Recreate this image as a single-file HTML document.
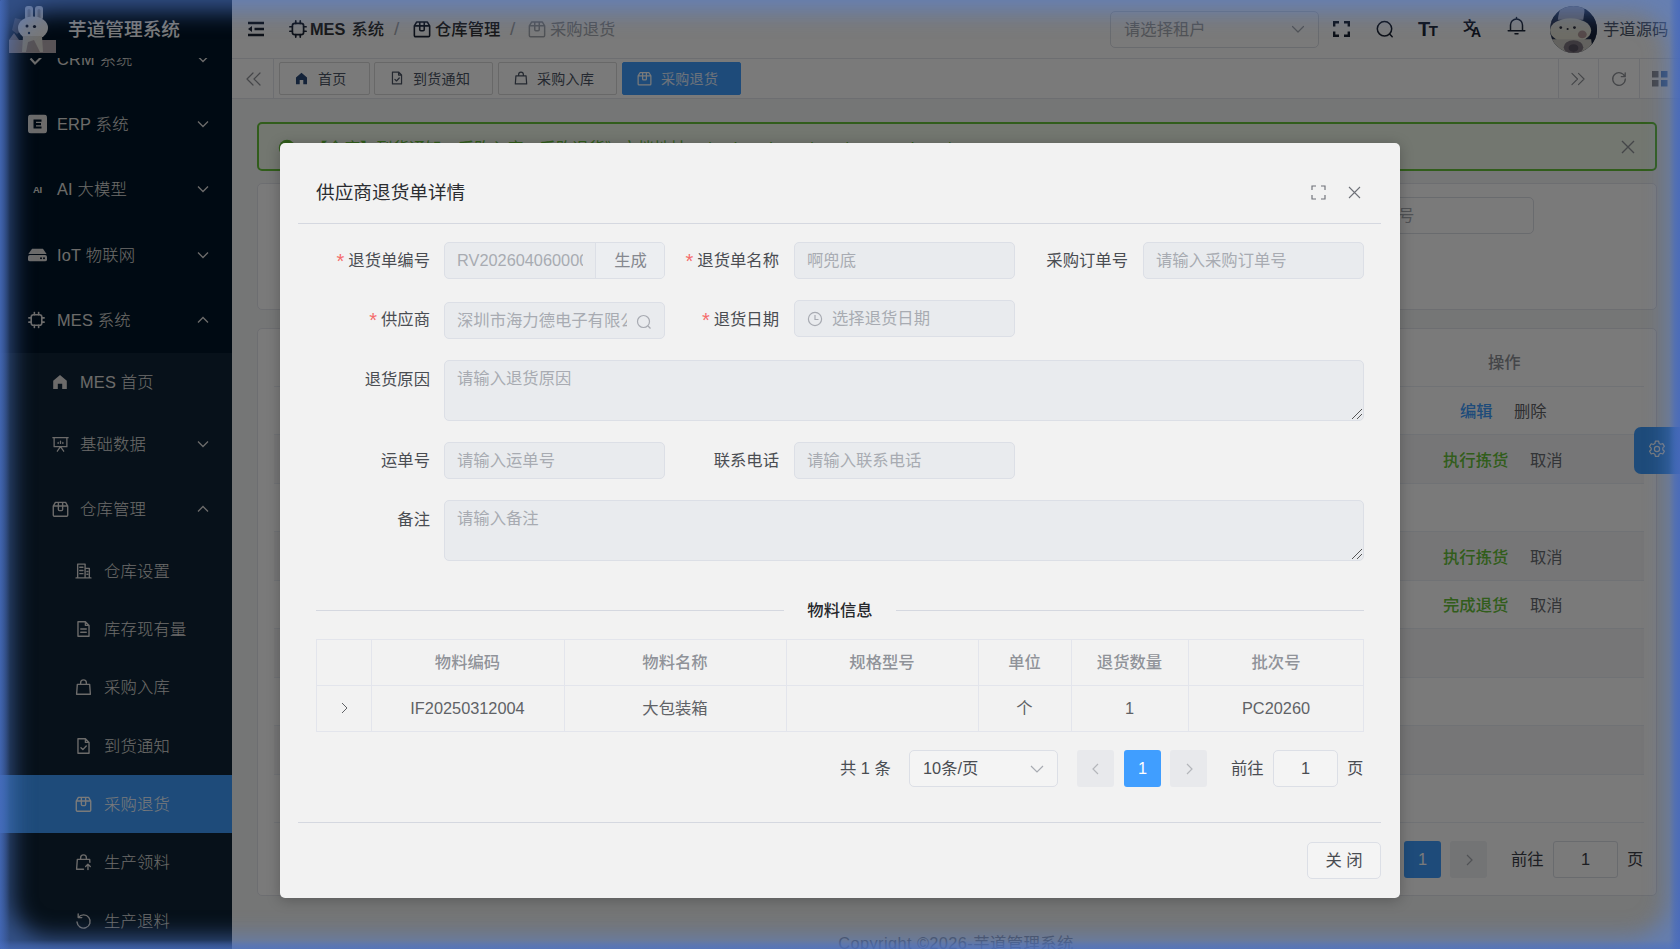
<!DOCTYPE html>
<html lang="zh-CN">
<head>
<meta charset="utf-8">
<title>芋道管理系统</title>
<style>
*{box-sizing:border-box}
html,body{margin:0;padding:0}
body{width:1680px;height:949px;overflow:hidden;position:relative;background:#f5f6f7;color:#303133;
  font-family:"Liberation Sans","Noto Sans CJK SC",sans-serif;font-size:16.33px;line-height:1}
.abs{position:absolute}
svg{display:block}
/* ---------- sidebar ---------- */
#side{position:absolute;left:0;top:0;width:232px;height:949px;background:#001529;overflow:hidden}
#menu{position:absolute;left:0;top:26px;width:232px}
.mi{position:relative;height:65.33px;color:#e2e0de;font-size:16.33px}
.mi.s{height:58.33px}
.mi .tx{position:absolute;top:50%;transform:translateY(-50%);white-space:nowrap;letter-spacing:.2px;font-weight:300}
.mi .ic{position:absolute;top:50%;transform:translateY(-50%)}
.mi .ar{position:absolute;left:196px;top:50%;width:14px;height:14px;transform:translateY(-50%)}
.l1 .ic{left:28px}.l1 .tx{left:57px}
.l2 .ic{left:52px}.l2 .tx{left:80px}
.l3 .ic{left:75px}.l3 .tx{left:104px}
.sub{background:#0f2438}
.mi.act{background:#409eff;color:#fff}
#logo{position:absolute;left:0;top:0;width:232px;height:58px;background:#001529}
#logo .t{position:absolute;left:68px;top:20.5px;font-size:18.67px;font-weight:500;color:#fff;letter-spacing:0}
/* ---------- header ---------- */
#hdr{position:absolute;left:232px;top:0;width:1448px;height:59px;background:#fff;border-bottom:1px solid #e4e7ed}
#tags svg{z-index:2}
#tags{z-index:0;position:absolute;left:232px;top:59px;width:1448px;height:40px;background:#fff;border-bottom:1px solid #e4e7ed}
.bc{position:absolute;top:21px;font-size:16.33px;font-weight:500;color:#303133;white-space:nowrap}
.tag{position:absolute;top:3px;z-index:0;height:33px;border:1px solid #d9d9d9;border-radius:2px;color:#4c5564;font-size:14px;background:#fff}
.tag .tx{position:absolute;top:9px;white-space:nowrap;letter-spacing:.3px}
.tag.on{background:#409eff;border-color:#409eff;color:#e3efff}

/* ---------- background page ---------- */
.card{position:absolute;background:#fff;border:1px solid #e4e7ed;border-radius:5px}
#alert{position:absolute;left:257px;top:122px;width:1400px;height:49px;border:2px solid #67c23a;border-radius:5px;background:#f0f9eb;color:#67c23a;font-size:16.33px}
.trow{position:absolute;left:16px;right:12px;height:1px;background:#ebeef5}
.op{position:absolute;font-size:16.33px;font-weight:500;white-space:nowrap}
.pbtn{position:absolute;top:841px;height:37px;border-radius:3px;font-size:16.33px;text-align:center;line-height:37px}
#overlay{position:absolute;left:0;top:0;width:1680px;height:949px;background:rgba(0,0,0,.52)}
#vig{position:absolute;left:-20px;top:-20px;width:1720px;height:989px;pointer-events:none;border-radius:70px;box-shadow:inset 0 0 22px 32px rgba(88,132,222,.56)}
#vig2{position:absolute;left:0;top:0;width:1680px;height:949px;pointer-events:none;background:
 linear-gradient(to top,rgba(75,112,195,.6) 0,rgba(75,112,195,.4) 4px,rgba(75,112,195,0) 9px) bottom/100% 9px no-repeat,
 linear-gradient(to right,rgba(70,108,190,.8) 0,rgba(70,108,190,.5) 4px,rgba(70,108,190,0) 10px) left/10px 100% no-repeat,
 linear-gradient(to left,rgba(70,105,188,.85) 0,rgba(70,105,188,.6) 5px,rgba(70,105,188,0) 11px) right/11px 100% no-repeat}

/* ---------- modal ---------- */
#modal{position:absolute;left:280px;top:143px;width:1120px;height:755px;background:#f2f2f2;border-radius:5px;color:#303133;box-shadow:0 2px 14px rgba(0,0,0,.25)}
#modal .hl{position:absolute;left:18px;width:1083px;height:1px;background:#d5d8e0}
.lb{position:absolute;width:200px;text-align:right;font-size:16.33px;color:#4a4d52;white-space:nowrap}
.lb i{font-style:normal;color:#f56c6c;margin-right:4px;font-size:20px;line-height:10px;position:relative;top:2px}
.ip{position:absolute;height:37px;background:#e9ebee;border:1px solid #dcdfe6;border-radius:5px;font-size:16.33px;color:#a8abb2;overflow:hidden}
.ip .tx{position:absolute;left:12px;top:9px;white-space:nowrap}
.ta{height:61px}
.th,.td{position:absolute;text-align:center;font-size:16.33px;white-space:nowrap}
.th{color:#909399;font-weight:500}
.td{color:#606266}
.vl{position:absolute;top:497px;width:1px;height:92px;background:#e3e5ec}
.pg{position:absolute;top:607px;height:37px;border-radius:3px;font-size:16.33px;text-align:center;line-height:37px}
</style>
</head>
<body>

<!-- ================= SIDEBAR ================= -->
<div id="side">
  <div id="menu">
    <div class="mi l1"><svg class="ic" style="width:20px;height:20px" viewBox="0 0 20 20" fill="none" stroke="currentColor" stroke-width="1.3" stroke-linejoin="round" stroke-linecap="round"><path d="M2.5 9.5l4.5 5L18 3.500" stroke-width="2.2" stroke-linecap="butt" stroke-linejoin="miter"/></svg><div class="tx">CRM 系统</div><svg class="ar" viewBox="0 0 14 14" fill="none" stroke="currentColor" stroke-width="1.3"><path d="M2 4.5l5 5 5-5"/></svg></div>
    <div class="mi l1"><svg class="ic" style="width:19px;height:19px" viewBox="0 0 19 19" fill="currentColor"><rect width="19" height="19" rx="3.2"/><path d="M5.5 5h8v2.2H8v1.3h5v2.2H8v1.3h5.5V14h-8z" fill="#001529"/></svg><div class="tx">ERP 系统</div><svg class="ar" viewBox="0 0 14 14" fill="none" stroke="currentColor" stroke-width="1.3"><path d="M2 4.5l5 5 5-5"/></svg></div>
    <div class="mi l1"><div class="ic" style="left:33px;width:10px;height:9px;font-size:9.5px;font-weight:700;line-height:9px;letter-spacing:-.3px;font-family:'Liberation Sans',sans-serif">AI</div><div class="tx">AI 大模型</div><svg class="ar" viewBox="0 0 14 14" fill="none" stroke="currentColor" stroke-width="1.3"><path d="M2 4.5l5 5 5-5"/></svg></div>
    <div class="mi l1"><svg class="ic" style="width:19px;height:13px" viewBox="0 0 19 13" fill="currentColor"><path d="M4.2 0h10.6L18.6 5.6H.4z"/><rect x="0" y="6.4" width="19" height="6.6" rx="2"/><circle cx="13" cy="9.7" r="1" fill="#001529"/><circle cx="16" cy="9.7" r="1" fill="#001529"/></svg><div class="tx">IoT 物联网</div><svg class="ar" viewBox="0 0 14 14" fill="none" stroke="currentColor" stroke-width="1.3"><path d="M2 4.5l5 5 5-5"/></svg></div>
    <div class="mi l1"><svg class="ic" style="width:17px;height:17px" viewBox="0 0 16 16" fill="none" stroke="currentColor" stroke-width="1.5" stroke-linejoin="round" stroke-linecap="round"><rect x="3" y="3" width="10" height="10" rx="2.2"/><path d="M6 .8v2.2M10 .8v2.2M6 13v2.2M10 13v2.2M.8 6h2.2M.8 10h2.2M13 6h2.2M13 10h2.2"/></svg><div class="tx">MES 系统</div><svg class="ar" viewBox="0 0 14 14" fill="none" stroke="currentColor" stroke-width="1.3"><path d="M2 9.5l5-5 5 5"/></svg></div>
    <div class="sub">
      <div class="mi s l2"><svg class="ic" style="width:16px;height:16px" viewBox="0 0 16 16" fill="currentColor"><path d="M8 1L1.2 6.8V15h4.6v-5.2h4.4V15h4.6V6.8z"/></svg><div class="tx">MES 首页</div></div>
      <div class="mi l2"><svg class="ic" style="width:17px;height:17px" viewBox="0 0 16 16" fill="none" stroke="currentColor" stroke-width="1.2" stroke-linejoin="round" stroke-linecap="round"><path d="M.8 2h14.4M2 2v8.5h12V2M5 14.8l3-4.3 3 4.3M5.8 6.5v1M8 5.2v2.3M10.2 6.5v1"/></svg><div class="tx">基础数据</div><svg class="ar" viewBox="0 0 14 14" fill="none" stroke="currentColor" stroke-width="1.3"><path d="M2 4.5l5 5 5-5"/></svg></div>
      <div class="mi l2"><svg class="ic" style="width:17px;height:17px" viewBox="0 0 16 16" fill="none" stroke="currentColor" stroke-width="1.3" stroke-linejoin="round" stroke-linecap="round"><path d="M1.2 5.2L3.2 1.8h9.6l2 3.4v8.6a1 1 0 0 1-1 1H2.2a1 1 0 0 1-1-1zM1.2 5.2h13.6M6 1.8v6.7a1 1 0 0 0 1 1h2a1 1 0 0 0 1-1V1.8"/></svg><div class="tx">仓库管理</div><svg class="ar" viewBox="0 0 14 14" fill="none" stroke="currentColor" stroke-width="1.3"><path d="M2 9.5l5-5 5 5"/></svg></div>
      <div class="mi s l3"><svg class="ic" style="width:17px;height:17px" viewBox="0 0 16 16" fill="none" stroke="currentColor" stroke-width="1.3" stroke-linejoin="round" stroke-linecap="round"><path d="M2.5 14.5V1.5h7v13M9.5 5.5h4v9M1 14.5h14M4.5 4.5h3M4.5 7.5h3M4.5 10.5h3M11.2 8.5h.8M11.2 11h.8"/></svg><div class="tx">仓库设置</div></div>
      <div class="mi s l3"><svg class="ic" style="width:17px;height:17px" viewBox="0 0 16 16" fill="none" stroke="currentColor" stroke-width="1.3" stroke-linejoin="round" stroke-linecap="round"><path d="M2.8 1.2h7L13.2 4.6v10.2H2.8zM9.8 1.2v3.4h3.4M5.4 8h5.2M5.4 11h5.2"/></svg><div class="tx">库存现有量</div></div>
      <div class="mi s l3"><svg class="ic" style="width:17px;height:17px" viewBox="0 0 16 16" fill="none" stroke="currentColor" stroke-width="1.3" stroke-linejoin="round" stroke-linecap="round"><path d="M2.2 5.5h11.6l.7 9.3H1.5zM5.3 5.5V4a2.7 2.7 0 0 1 5.4 0v1.5"/></svg><div class="tx">采购入库</div></div>
      <div class="mi s l3"><svg class="ic" style="width:17px;height:17px" viewBox="0 0 16 16" fill="none" stroke="currentColor" stroke-width="1.3" stroke-linejoin="round" stroke-linecap="round"><path d="M2.8 1.2h7L13.2 4.6v10.2H2.8zM9.8 1.2v3.4h3.4M5.6 9.6l1.8 1.8 3.2-3.4"/></svg><div class="tx">到货通知</div></div>
      <div class="mi s l3 act"><svg class="ic" style="width:17px;height:17px" viewBox="0 0 16 16" fill="none" stroke="currentColor" stroke-width="1.3" stroke-linejoin="round" stroke-linecap="round"><path d="M1.2 5.2L3.2 1.8h9.6l2 3.4v8.6a1 1 0 0 1-1 1H2.2a1 1 0 0 1-1-1zM1.2 5.2h13.6M6 1.8v6.7a1 1 0 0 0 1 1h2a1 1 0 0 0 1-1V1.8"/></svg><div class="tx">采购退货</div></div>
      <div class="mi s l3"><svg class="ic" style="width:17px;height:17px" viewBox="0 0 16 16" fill="none" stroke="currentColor" stroke-width="1.3" stroke-linejoin="round" stroke-linecap="round"><path d="M8 14.8H1.5l.7-9.3h11.6l.2 2.8M5.3 5.5V4a2.7 2.7 0 0 1 5.4 0v1.5M12.2 15.2V10M10 12.2l2.2-2.2 2.2 2.2"/></svg><div class="tx">生产领料</div></div>
      <div class="mi s l3"><svg class="ic" style="width:17px;height:17px" viewBox="0 0 16 16" fill="none" stroke="currentColor" stroke-width="1.3" stroke-linejoin="round" stroke-linecap="round"><path d="M3.2 4.6A6.2 6.2 0 1 1 1.9 9M3 1.4v3.4h3.4"/></svg><div class="tx">生产退料</div></div>
    </div>
  </div>
  <div id="logo"><svg class="abs" style="left:9px;top:6px" width="47" height="47" viewBox="0 0 47 47">
<rect x="0" y="34" width="47" height="13" fill="#b9aeb4"/>
<path d="M6 12l8 2 2 8-8 6-5-4z" fill="#8d7f80" opacity=".6"/>
<path d="M0 34l5-7 5 7z" fill="#9c8c88"/>
<rect x="16" y="0" width="8" height="14" rx="3" fill="#e9e9e6"/><rect x="26" y="0" width="8" height="14" rx="3" fill="#e9e9e6"/>
<rect x="18.500" y="3" width="3" height="10" rx="1.500" fill="#a9a6a4"/><rect x="28.500" y="3" width="3" height="10" rx="1.500" fill="#a9a6a4"/>
<ellipse cx="24" cy="22" rx="15" ry="11.500" fill="#fbfbfb"/>
<path d="M14 30h19l1 16H13z" fill="#e4e2dc"/>
<path d="M19 36l6-2 6 12H17z" fill="#b5a9ae"/>
<circle cx="18" cy="20" r="1.500" fill="#0a1020"/><circle cx="25.500" cy="20.500" r="1.600" fill="#0a1020"/><circle cx="20" cy="27" r="1.200" fill="#2b4a78"/>
</svg><div class="t">芋道管理系统</div></div>
</div>

<!-- ================= HEADER ================= -->
<div id="hdr"><svg class="abs" style="left:15px;top:21px;color:#1d2433" width="18" height="16" viewBox="0 0 18 16" fill="none" stroke="currentColor" stroke-width="1.4" stroke-linejoin="round" stroke-linecap="round"><path d="M1 2h16M7.5 8h9.5M1 14h16" stroke-width="2.4" stroke-linecap="butt"/><path d="M5 5L1 8l4 3z" fill="currentColor" stroke="none"/></svg><svg class="abs" style="left:57px;top:20px;color:#1d2433" width="18" height="18" viewBox="0 0 16 16" fill="none" stroke="currentColor" stroke-width="1.5" stroke-linejoin="round" stroke-linecap="round"><rect x="3" y="3" width="10" height="10" rx="2.2"/><path d="M6 .8v2.2M10 .8v2.2M6 13v2.2M10 13v2.2M.8 6h2.2M.8 10h2.2M13 6h2.2M13 10h2.2"/></svg><svg class="abs" style="left:181px;top:20px;color:#1d2433" width="18" height="18" viewBox="0 0 16 16" fill="none" stroke="currentColor" stroke-width="1.4" stroke-linejoin="round" stroke-linecap="round"><path d="M1.2 5.2L3.2 1.8h9.6l2 3.4v8.6a1 1 0 0 1-1 1H2.2a1 1 0 0 1-1-1zM1.2 5.2h13.6M6 1.8v6.7a1 1 0 0 0 1 1h2a1 1 0 0 0 1-1V1.8"/></svg><svg class="abs" style="left:296px;top:20px;color:#a8abb2" width="18" height="18" viewBox="0 0 16 16" fill="none" stroke="currentColor" stroke-width="1.3" stroke-linejoin="round" stroke-linecap="round"><path d="M1.2 5.2L3.2 1.8h9.6l2 3.4v8.6a1 1 0 0 1-1 1H2.2a1 1 0 0 1-1-1zM1.2 5.2h13.6M6 1.8v6.7a1 1 0 0 0 1 1h2a1 1 0 0 0 1-1V1.8"/></svg><div class="abs" style="left:162px;top:19px;font-size:19px;color:#a8abb2">/</div><div class="abs" style="left:278px;top:19px;font-size:19px;color:#a8abb2">/</div><div class="abs" style="left:878px;top:11px;width:209px;height:37px;border:1px solid #dcdfe6;border-radius:5px"></div><div class="abs" style="left:892px;top:21px;font-size:16.33px;color:#a8abb2;white-space:nowrap">请选择租户</div><svg class="abs" style="left:1059px;top:23px;color:#a8abb2" width="14" height="12" viewBox="0 0 14 12" fill="none" stroke="currentColor" stroke-width="1.2" stroke-linejoin="round" stroke-linecap="round"><path d="M1.5 3.5l5.5 5.5 5.5-5.5"/></svg><svg class="abs" style="left:1101px;top:21px;color:#1d2433" width="17" height="16" viewBox="0 0 17 16" fill="none" stroke="currentColor" stroke-width="1.4" stroke-linejoin="round" stroke-linecap="round"><path d="M1.2 5.5V1.2H6M11 1.2h4.8v4.3M15.8 10.5v4.3H11M6 14.8H1.2v-4.3" stroke-width="2.4" stroke-linecap="butt" stroke-linejoin="miter"/></svg><svg class="abs" style="left:1144px;top:20px;color:#1d2433" width="18" height="18" viewBox="0 0 18 18" fill="none" stroke="currentColor" stroke-width="1.5" stroke-linejoin="round" stroke-linecap="round"><circle cx="8.5" cy="8.8" r="7.2"/><path d="M13.6 14l2.6 2.8"/></svg><div class="abs" style="left:1186px;top:19px;font-size:20px;font-weight:700;color:#1d2433;font-family:'Liberation Sans',sans-serif;letter-spacing:-1.5px;line-height:20px">T<span style="font-size:15px">T</span></div><div class="abs" style="left:1231px;top:19px;font-size:13px;font-weight:700;color:#1d2433;line-height:13px">文</div><div class="abs" style="left:1239px;top:25px;font-size:14px;font-weight:700;color:#1d2433;line-height:14px;font-family:'Liberation Sans',sans-serif">A</div><svg class="abs" style="left:1275px;top:16px;color:#1d2433" width="19" height="20" viewBox="0 0 19 20" fill="none" stroke="currentColor" stroke-width="1.5" stroke-linejoin="round" stroke-linecap="round"><path d="M9.5 1.5v1.3M3.5 14.5V9a6 6 0 0 1 12 0v5.5M1.2 14.8h16.6M8 17.8h3"/></svg><div class="abs" style="left:1317.500px;top:5.500px;width:47px;height:47px;border-radius:50%;overflow:hidden"><svg width="47" height="47" viewBox="0 0 48 48"><rect width="48" height="48" fill="#2a3650"/><path d="M10 0h24l4 14H8z" fill="#b5b4c2"/><path d="M36 0h12v48h-6l-2-20-6-14z" fill="#18233c"/><path d="M0 0h12L8 10 0 18z" fill="#22304a"/><ellipse cx="21" cy="25" rx="21" ry="12.500" fill="#e6e4d6"/><path d="M2 34h40l2 14H0z" fill="#cfcec6"/><ellipse cx="24" cy="42" rx="10" ry="7" fill="#7e7580"/><ellipse cx="24" cy="43" rx="5" ry="4" fill="#5b5563"/><circle cx="11" cy="22" r="1.400" fill="#2a2a33"/><circle cx="18" cy="23.500" r="1.100" fill="#2a2a33"/><circle cx="25" cy="22" r="1.400" fill="#2a2a33"/><ellipse cx="33" cy="29" rx="4.500" ry="4" fill="#b39a98"/></svg></div><div class="abs" style="left:1371px;top:21px;font-size:16.33px;color:#4c5564;white-space:nowrap">芋道源码</div>
  <div class="bc" style="left:78px;word-spacing:1.5px"><b>MES</b> 系统</div>
  <div class="bc" style="left:203px">仓库管理</div>
  <div class="bc" style="left:318px;color:#a8abb2;font-weight:400">采购退货</div>
</div>
<div id="tags"><svg class="abs" style="left:14px;top:13px;color:#909399" width="15" height="14" viewBox="0 0 15 14" fill="none" stroke="currentColor" stroke-width="1.2" stroke-linejoin="round" stroke-linecap="round"><path d="M7 1L1 7l6 6M14 1L8 7l6 6"/></svg><div class="abs" style="left:41px;top:0;width:1px;height:39px;background:#e4e7ed"></div><svg class="abs" style="left:63px;top:13px;color:#2b4a78" width="13" height="13" viewBox="0 0 16 16" fill="currentColor"><path d="M8 1L1.2 6.8V15h4.6v-5.2h4.4V15h4.6V6.8z"/></svg><svg class="abs" style="left:158px;top:12px;color:#4c5564" width="14" height="14" viewBox="0 0 16 16" fill="none" stroke="currentColor" stroke-width="1.4" stroke-linejoin="round" stroke-linecap="round"><path d="M2.8 1.2h7L13.2 4.6v10.2H2.8zM9.8 1.2v3.4h3.4M5.6 9.6l1.8 1.8 3.2-3.4"/></svg><svg class="abs" style="left:282px;top:12px;color:#4c5564" width="14" height="14" viewBox="0 0 16 16" fill="none" stroke="currentColor" stroke-width="1.4" stroke-linejoin="round" stroke-linecap="round"><path d="M2.2 5.5h11.6l.7 9.3H1.5zM5.3 5.5V4a2.7 2.7 0 0 1 5.4 0v1.5"/></svg><svg class="abs" style="left:405px;top:12px;color:#fff" width="15" height="15" viewBox="0 0 16 16" fill="none" stroke="currentColor" stroke-width="1.3" stroke-linejoin="round" stroke-linecap="round"><path d="M1.2 5.2L3.2 1.8h9.6l2 3.4v8.6a1 1 0 0 1-1 1H2.2a1 1 0 0 1-1-1zM1.2 5.2h13.6M6 1.8v6.7a1 1 0 0 0 1 1h2a1 1 0 0 0 1-1V1.8"/></svg><div class="abs" style="left:1326px;top:0;width:1px;height:39px;background:#e4e7ed"></div><div class="abs" style="left:1366px;top:0;width:1px;height:39px;background:#e4e7ed"></div><div class="abs" style="left:1407px;top:0;width:1px;height:39px;background:#e4e7ed"></div><svg class="abs" style="left:1339px;top:13px;color:#909399" width="14" height="14" viewBox="0 0 15 14" fill="none" stroke="currentColor" stroke-width="1.2" stroke-linejoin="round" stroke-linecap="round"><path d="M1 1l6 6-6 6M8 1l6 6-6 6"/></svg><svg class="abs" style="left:1379px;top:12px;color:#909399" width="16" height="16" viewBox="0 0 16 16" fill="none" stroke="currentColor" stroke-width="1.3" stroke-linejoin="round" stroke-linecap="round"><path d="M13.8 5.5A6.3 6.3 0 1 0 14.3 8M14.2 1.8v3.9h-3.9"/></svg><svg class="abs" style="left:1420px;top:12px;color:#909399" width="16" height="16" viewBox="0 0 16 16" fill="currentColor"><rect x="0" y="0" width="6.5" height="6.5"/><rect x="0" y="9" width="6.5" height="6.5"/><rect x="9" y="0" width="6.5" height="6.5" fill="#6f9ad6"/><rect x="9" y="9" width="6.5" height="6.5" fill="#6f9ad6"/></svg>
  <div class="tag" style="left:47px;width:91px"><div class="tx" style="left:38px">首页</div></div>
  <div class="tag" style="left:142px;width:119px"><div class="tx" style="left:38px">到货通知</div></div>
  <div class="tag" style="left:266px;width:119px"><div class="tx" style="left:38px">采购入库</div></div>
  <div class="tag on" style="left:390px;width:119px"><div class="tx" style="left:38px">采购退货</div></div>
</div>


<!-- ================= BACKGROUND PAGE ================= -->
<div id="alert"><svg class="abs" style="left:19px;top:15px" width="18" height="18" viewBox="0 0 18 18"><circle cx="9" cy="9" r="8.2" fill="#67c23a"/><rect x="8" y="7.500" width="2" height="6" fill="#f0f9eb"/><rect x="8" y="4" width="2" height="2" fill="#f0f9eb"/></svg>
  <div class="abs" style="left:52px;top:16px;white-space:nowrap">【仓库】到货通知、采购入库、采购退货》文档地址：doc.iocoder.cn/mes/wm-purchase/</div>
  <svg class="abs" style="left:1361px;top:15px" width="16" height="16" viewBox="0 0 16 16"><path d="M2 2L14 14M14 2L2 14" stroke="#909399" stroke-width="1.4" fill="none"/></svg>
</div>
<div class="card" style="left:257px;top:183px;width:1400px;height:127px">
  <div class="abs" style="left:1043px;top:13px;width:233px;height:37px;border:1px solid #dcdfe6;border-radius:5px"></div>
  <div class="abs" style="left:1140px;top:23px;color:#a8abb2;font-size:16.33px">号</div>
</div>
<div class="card" style="left:257px;top:328px;width:1400px;height:568px">
  <div class="abs" style="left:16px;right:12px;top:106px;height:48px;background:#f7f7f8"></div><div class="abs" style="left:16px;right:12px;top:203px;height:48px;background:#f7f7f8"></div><div class="abs" style="left:16px;right:12px;top:300px;height:48px;background:#f7f7f8"></div><div class="abs" style="left:16px;right:12px;top:397px;height:48px;background:#f7f7f8"></div><div class="op" style="left:1230px;top:24.5px;color:#909399">操作</div>
  <div class="trow" style="top:57px"></div>
  <div class="trow" style="top:105px"></div>
  <div class="trow" style="top:154px"></div>
  <div class="trow" style="top:202px"></div>
  <div class="trow" style="top:251px"></div>
  <div class="trow" style="top:299px"></div>
  <div class="trow" style="top:348px"></div>
  <div class="trow" style="top:396px"></div>
  <div class="trow" style="top:445px"></div>
  <div class="trow" style="top:493px"></div>
  <div class="op" style="left:1202px;top:73.5px;color:#409eff">编辑</div>
  <div class="op" style="left:1256px;top:73.5px;color:#606266;font-weight:400">删除</div>
  <div class="op" style="left:1185px;top:122.5px;color:#67c23a">执行拣货</div>
  <div class="op" style="left:1272px;top:122.5px;color:#6a6d73;font-weight:400">取消</div>
  <div class="op" style="left:1185px;top:219.5px;color:#67c23a">执行拣货</div>
  <div class="op" style="left:1272px;top:219.5px;color:#6a6d73;font-weight:400">取消</div>
  <div class="op" style="left:1185px;top:267.5px;color:#67c23a">完成退货</div>
  <div class="op" style="left:1272px;top:267.5px;color:#6a6d73;font-weight:400">取消</div>
</div>
<div class="pbtn" style="left:1404px;width:37px;background:#409eff;color:#fff">1</div>
<div class="pbtn" style="left:1450px;width:37px;background:#f0f2f5;color:#303133"><svg class="abs" style="left:13px;top:13px" width="12" height="12" viewBox="0 0 12 12"><path d="M4 1L9 6L4 11" stroke="#a8abb2" stroke-width="1.2" fill="none"/></svg></div>
<div class="abs" style="left:1511px;top:851px;font-size:16.33px;color:#3c4048">前往</div>
<div class="pbtn" style="left:1553px;width:65px;border:1px solid #dcdfe6;background:#fff;color:#3c4048;line-height:35px">1</div>
<div class="abs" style="left:1627px;top:851px;font-size:16.33px;color:#3c4048">页</div>
<div class="abs" style="left:756px;top:935px;width:400px;text-align:center;font-size:16.33px;color:#909399;white-space:nowrap;letter-spacing:.42px">Copyright ©2026-芋道管理系统</div>
<div class="abs" style="left:1634px;top:427px;width:46px;height:47px;background:#409eff;border-radius:7px 0 0 7px"><svg class="abs" style="left:14px;top:13px" width="18" height="18" viewBox="0 0 18 18" fill="none" stroke="#fff" stroke-width="1.2" stroke-linejoin="round"><path d="M7.4 1.2h3.2l.5 2.2 1.6.9 2.1-.7 1.6 2.8-1.6 1.5v1.8l1.6 1.5-1.6 2.8-2.1-.7-1.6.9-.5 2.2H7.4l-.5-2.2-1.6-.9-2.1.7-1.6-2.8 1.6-1.5V8.1L1.600 6.600l1.600-2.800 2.100.700 1.600-.900z"/><circle cx="9" cy="9" r="2.6"/></svg></div>

<div id="overlay"></div>

<!-- ================= MODAL ================= -->
<div id="modal">
  <div class="abs" style="left:36px;top:40.5px;font-size:18.67px;color:#2b2d31;white-space:nowrap">供应商退货单详情</div>
  <svg class="abs" style="left:1031px;top:42px" width="15" height="15" viewBox="0 0 15 15"><path d="M1 5V1H5M10 1H14V5M14 10V14H10M5 14H1V10" stroke="#6e7178" stroke-width="1.15" fill="none"/></svg>
  <svg class="abs" style="left:1068px;top:43px" width="13" height="13" viewBox="0 0 13 13"><path d="M1 1L12 12M12 1L1 12" stroke="#6e7178" stroke-width="1.1" fill="none"/></svg>
  <div class="hl" style="top:80px"></div>

  <!-- row 1 -->
  <div class="lb" style="left:-50px;top:109px"><i>*</i>退货单编号</div>
  <div class="ip" style="left:164px;top:99px;width:221px">
    <div class="tx" style="width:126px;overflow:hidden">RV202604060000</div>
    <div class="abs" style="left:150px;top:-1px;width:71px;height:37px;border:1px solid #dcdfe6;border-radius:0 5px 5px 0;background:#eceef1;color:#85888f;text-align:center;line-height:35px">生成</div>
  </div>
  <div class="lb" style="left:299px;top:109px"><i>*</i>退货单名称</div>
  <div class="ip" style="left:514px;top:99px;width:221px"><div class="tx">啊兜底</div></div>
  <div class="lb" style="left:648px;top:109px">采购订单号</div>
  <div class="ip" style="left:863px;top:99px;width:221px"><div class="tx">请输入采购订单号</div></div>

  <!-- row 2 -->
  <div class="lb" style="left:-50px;top:168px"><i>*</i>供应商</div>
  <div class="ip" style="left:164px;top:159px;width:221px">
    <div class="tx" style="width:170px;overflow:hidden">深圳市海力德电子有限公司</div>
    <svg class="abs" style="left:191px;top:11px" width="16" height="16" viewBox="0 0 16 16"><circle cx="7.5" cy="7.5" r="6" stroke="#a8abb2" stroke-width="1.2" fill="none"/><path d="M12 12L14.5 14.5" stroke="#a8abb2" stroke-width="1.2"/></svg>
  </div>
  <div class="lb" style="left:299px;top:168px"><i>*</i>退货日期</div>
  <div class="ip" style="left:514px;top:157px;width:221px">
    <svg class="abs" style="left:12px;top:10px" width="16" height="16" viewBox="0 0 16 16"><circle cx="8" cy="8" r="6.6" stroke="#a8abb2" stroke-width="1.2" fill="none"/><path d="M8 4V8.5H11.5" stroke="#a8abb2" stroke-width="1.2" fill="none"/></svg>
    <div class="tx" style="left:37px">选择退货日期</div>
  </div>

  <!-- row 3 -->
  <div class="lb" style="left:-50px;top:228px">退货原因</div>
  <div class="ip ta" style="left:164px;top:217px;width:920px"><div class="tx">请输入退货原因</div>
    <svg class="abs" style="right:0;bottom:0" width="12" height="12" viewBox="0 0 12 12"><path d="M11 1L1 11M11 6L6 11" stroke="#555" stroke-width="1" fill="none"/></svg></div>

  <!-- row 4 -->
  <div class="lb" style="left:-50px;top:309px">运单号</div>
  <div class="ip" style="left:164px;top:299px;width:221px"><div class="tx">请输入运单号</div></div>
  <div class="lb" style="left:299px;top:309px">联系电话</div>
  <div class="ip" style="left:514px;top:299px;width:221px"><div class="tx">请输入联系电话</div></div>

  <!-- row 5 -->
  <div class="lb" style="left:-50px;top:368px">备注</div>
  <div class="ip ta" style="left:164px;top:357px;width:920px"><div class="tx">请输入备注</div>
    <svg class="abs" style="right:0;bottom:0" width="12" height="12" viewBox="0 0 12 12"><path d="M11 1L1 11M11 6L6 11" stroke="#555" stroke-width="1" fill="none"/></svg></div>

  <!-- divider -->
  <div class="abs" style="left:36px;top:467px;width:468px;height:1px;background:#d5d8e0"></div>
  <div class="abs" style="left:616px;top:467px;width:468px;height:1px;background:#d5d8e0"></div>
  <div class="abs" style="left:460px;top:459px;width:200px;text-align:center;font-size:16.33px;font-weight:500;color:#26282c">物料信息</div>

  <!-- table -->
  <div class="abs" style="left:36px;top:496px;width:1048px;height:93px;border:1px solid #e3e5ec"></div>
  <div class="abs" style="left:36px;top:542px;width:1048px;height:1px;background:#e3e5ec"></div>
  <div class="vl" style="left:91px"></div>
  <div class="vl" style="left:284px"></div>
  <div class="vl" style="left:506px"></div>
  <div class="vl" style="left:698px"></div>
  <div class="vl" style="left:791px"></div>
  <div class="vl" style="left:908px"></div>
  <div class="th" style="left:91px;width:193px;top:511px">物料编码</div>
  <div class="th" style="left:284px;width:222px;top:511px">物料名称</div>
  <div class="th" style="left:506px;width:192px;top:511px">规格型号</div>
  <div class="th" style="left:698px;width:93px;top:511px">单位</div>
  <div class="th" style="left:791px;width:117px;top:511px">退货数量</div>
  <div class="th" style="left:908px;width:176px;top:511px">批次号</div>
  <svg class="abs" style="left:58px;top:559px" width="12" height="12" viewBox="0 0 12 12"><path d="M4 1L9 6L4 11" stroke="#606266" stroke-width="1" fill="none"/></svg>
  <div class="td" style="left:91px;width:193px;top:557px">IF20250312004</div>
  <div class="td" style="left:284px;width:222px;top:557px">大包装箱</div>
  <div class="td" style="left:698px;width:93px;top:557px">个</div>
  <div class="td" style="left:791px;width:117px;top:557px">1</div>
  <div class="td" style="left:908px;width:176px;top:557px">PC20260</div>

  <!-- pagination -->
  <div class="abs" style="left:560px;top:617px;font-size:16.33px;color:#4a4d52;white-space:nowrap">共 1 条</div>
  <div class="pg" style="left:629px;width:149px;border:1px solid #dcdfe6;background:#f4f4f4;border-radius:5px;text-align:left;color:#4a4d52;line-height:35px;padding-left:13px">10条/页
    <svg class="abs" style="left:120px;top:12px" width="14" height="12" viewBox="0 0 14 12"><path d="M1 3L7 9L13 3" stroke="#a8abb2" stroke-width="1.2" fill="none"/></svg></div>
  <div class="pg" style="left:797px;width:37px;background:#e8e9ec">
    <svg class="abs" style="left:13px;top:13px" width="12" height="12" viewBox="0 0 12 12"><path d="M8 1L3 6L8 11" stroke="#b4b6bb" stroke-width="1.2" fill="none"/></svg></div>
  <div class="pg" style="left:844px;width:37px;background:#409eff;color:#fff;font-weight:400">1</div>
  <div class="pg" style="left:890px;width:37px;background:#e8e9ec">
    <svg class="abs" style="left:13px;top:13px" width="12" height="12" viewBox="0 0 12 12"><path d="M4 1L9 6L4 11" stroke="#b4b6bb" stroke-width="1.2" fill="none"/></svg></div>
  <div class="abs" style="left:951px;top:617px;font-size:16.33px;color:#4a4d52">前往</div>
  <div class="pg" style="left:993px;width:65px;border:1px solid #dcdfe6;background:#f4f4f4;border-radius:5px;color:#4a4d52;line-height:35px">1</div>
  <div class="abs" style="left:1067px;top:617px;font-size:16.33px;color:#4a4d52">页</div>

  <div class="hl" style="top:679px"></div>
  <div class="abs" style="left:1027px;top:699px;width:74px;height:37px;border:1px solid #dcdfe6;border-radius:5px;background:#f4f4f4;font-size:16.33px;color:#4a4d52;text-align:center;line-height:35px">关 闭</div>
</div>

<div id="vig"></div><div id="vig2"></div>
</body>
</html>
